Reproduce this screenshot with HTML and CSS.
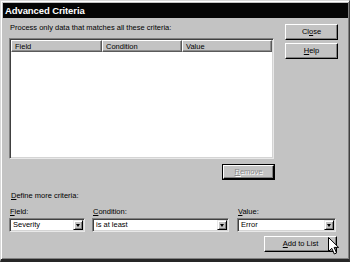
FILE: index.html
```html
<!DOCTYPE html>
<html>
<head>
<meta charset="utf-8">
<link rel="stylesheet" href="styles.css">
</head>
<body>
<div class="window">
  <div class="titlebar">Advanced Criteria</div>
  <div class="body">
    <div class="top">
      <div class="main">
        <div class="caption">Process only data that matches all these criteria:</div>
        <div class="listview">
          <div class="lv-header">
            <div class="col c1">Field</div>
            <div class="col c2">Condition</div>
            <div class="col c3">Value</div>
          </div>
        </div>
        <div class="remove-row">
          <div class="frame"><div class="btn disabled"><span><u>R</u>emove</span></div></div>
        </div>
      </div>
      <div class="side">
        <div class="btn">Cl<u>o</u>se</div>
        <div class="btn"><u>H</u>elp</div>
      </div>
    </div>
    <div class="define"><u>D</u>efine more criteria:</div>
    <div class="fields">
      <div class="field f1">
        <div class="label"><u>F</u>ield:</div>
        <div class="combo"><span class="val">Severity</span><span class="arrow"></span></div>
      </div>
      <div class="field f2">
        <div class="label"><u>C</u>ondition:</div>
        <div class="combo"><span class="val">is at least</span><span class="arrow"></span></div>
      </div>
      <div class="field f3">
        <div class="label"><u>V</u>alue:</div>
        <div class="combo"><span class="val">Error</span><span class="arrow"></span></div>
      </div>
    </div>
    <div class="add-row">
      <div class="btn add"><u>A</u>dd to List</div>
    </div>
  </div>
  <svg class="cursor" width="12" height="18" viewBox="0 0 12 18">
    <path d="M0.5 0.5 L0.5 14.5 L3.8 11.3 L6.3 17 L8.6 16 L6.1 10.4 L10.6 10.4 Z" fill="#fff" stroke="#000" stroke-width="1" stroke-linejoin="miter"/>
  </svg>
</div>
</body>
</html>
```

FILE: styles.css
```css
html, body {
  margin: 0;
  padding: 0;
  background: #1a1a1a;
}
.window {
  position: relative;
  width: 350px;
  height: 262px;
  box-sizing: border-box;
  background: #c3c3c3;
  border-top: 1px solid #d8d8d8;
  border-left: 1px solid #d8d8d8;
  border-right: 1px solid #404040;
  border-bottom: 3px solid #262626;
  box-shadow: inset 1px 1px 0 #ffffff, inset -1px -1px 0 #808080;
  font-family: "Liberation Sans", Arial, sans-serif;
  font-size: 7.5px;
  color: #000;
  overflow: hidden;
}
.titlebar {
  margin: 2px 1px 0 2px;
  height: 15px;
  background: #050505;
  color: #fff;
  font-weight: bold;
  font-size: 9.5px;
  line-height: 15px;
  padding-left: 2px;
  letter-spacing: -0.1px;
}
.body {
  padding: 0 10px 0 8px;
}
.top {
  display: flex;
  gap: 10px;
}
.main {
  width: 266px;
}
.caption {
  margin-top: 5px;
  height: 10px;
  line-height: 10px;
  padding-left: 1px;
}
.listview {
  margin-top: 5px;
  width: 265px;
  height: 121px;
  box-sizing: border-box;
  background: #fff;
  border-top: 1px solid #808080;
  border-left: 1px solid #808080;
  border-right: 1px solid #e8e8e8;
  border-bottom: 1px solid #e8e8e8;
  box-shadow: inset 1px 1px 0 #404040, inset -1px -1px 0 #d4d4d4;
  padding: 1px;
}
.lv-header {
  display: flex;
  height: 12px;
  background: #c3c3c3;
}
.col {
  box-sizing: border-box;
  height: 12px;
  line-height: 11px;
  padding-left: 3px;
  border-top: 1px solid #fff;
  border-left: 1px solid #fff;
  border-right: 1px solid #5a5a5a;
  border-bottom: 1px solid #5a5a5a;
  box-shadow: inset -1px -1px 0 #8c8c8c;
}
.c1 { width: 91px; }
.c2 { width: 80px; }
.c3 { flex: 1; }
.remove-row {
  display: flex;
  justify-content: flex-end;
  margin-top: 5px;
}
.frame {
  border: 1px solid #000;
}
.btn {
  box-sizing: border-box;
  height: 16px;
  line-height: 13px;
  text-align: center;
  background: #c3c3c3;
  border-top: 1px solid #fff;
  border-left: 1px solid #fff;
  border-right: 1px solid #000;
  border-bottom: 1px solid #000;
  box-shadow: inset -1px -1px 0 #808080;
}
.frame .btn {
  width: 51px;
  height: 14px;
  line-height: 12px;
}
.btn.disabled {
  color: #8a8a8a;
  text-shadow: 1px 1px 0 #fff;
}
.side {
  width: 53px;
  display: flex;
  flex-direction: column;
  gap: 3px;
  padding-top: 6px;
}
.define {
  margin-top: 11px;
  height: 10px;
  line-height: 10px;
  padding-left: 2px;
}
.fields {
  display: flex;
  margin-top: 6px;
  margin-right: 2px;
}
.field .label {
  height: 10px;
  line-height: 10px;
  padding-left: 1px;
}
.f1 { width: 76px; }
.f2 { width: 137px; margin-left: 7px; }
.f3 { width: 99px; margin-left: 8px; }
.combo {
  margin-top: 1px;
  height: 14px;
  box-sizing: border-box;
  display: flex;
  align-items: center;
  background: #fff;
  border-top: 1px solid #808080;
  border-left: 1px solid #808080;
  border-right: 1px solid #e8e8e8;
  border-bottom: 1px solid #e8e8e8;
  box-shadow: inset 1px 1px 0 #404040, inset -1px -1px 0 #d4d4d4;
  padding: 1px;
}
.combo .val {
  flex: 1;
  padding-left: 2px;
  line-height: 10px;
}
.arrow {
  position: relative;
  width: 10px;
  height: 10px;
  box-sizing: border-box;
  background: #c3c3c3;
  border-top: 1px solid #e8e8e8;
  border-left: 1px solid #e8e8e8;
  border-right: 1px solid #000;
  border-bottom: 1px solid #000;
  box-shadow: inset 1px 1px 0 #fff, inset -1px -1px 0 #808080;
  display: flex;
  align-items: center;
  justify-content: center;
}
.arrow::after {
  content: "";
  width: 0;
  height: 0;
  border-left: 2.5px solid transparent;
  border-right: 2.5px solid transparent;
  border-top: 3px solid #000;
  margin-top: 1px;
}
.add-row {
  display: flex;
  justify-content: flex-end;
  margin-top: 4px;
  margin-right: 2px;
}
.btn.add {
  width: 73px;
}
.cursor {
  position: absolute;
  left: 327px;
  top: 236px;
}
```
